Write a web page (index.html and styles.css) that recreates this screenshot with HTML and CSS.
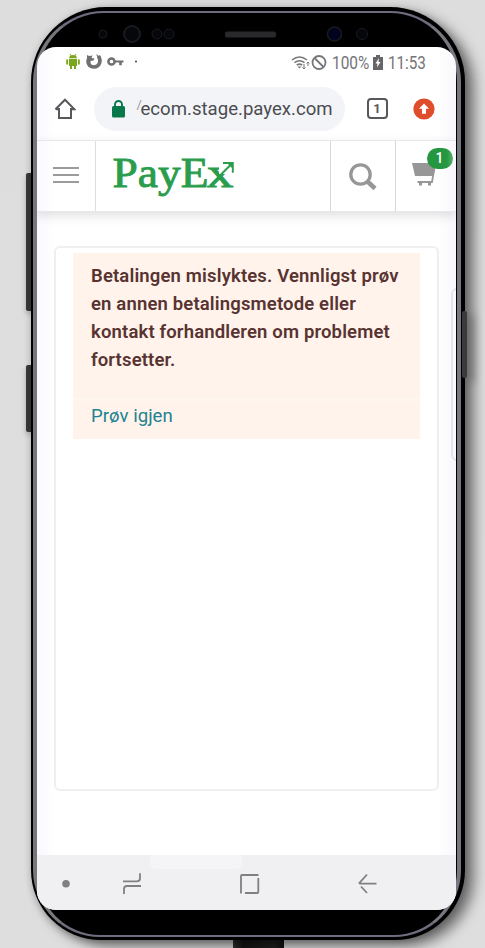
FILE: index.html
```
<!DOCTYPE html>
<html lang="nb">
<head>
<meta charset="utf-8">
<title>PayEx</title>
<link rel="stylesheet" href="styles.css">
</head>
<body>
<div class="scene">
  <i class="key key-volume"></i>
  <i class="key key-assist"></i>
  <i class="cable"></i>
  <div class="phone">
    <i class="rim"></i>
    <svg class="sensors" viewBox="0 0 434 40" width="434" height="40" fill="#06070b" stroke="#191a20">
      <circle cx="72" cy="27" r="4"/><circle cx="101" cy="27" r="8" stroke-width="2"/>
      <circle cx="126" cy="27" r="5"/><circle cx="138" cy="27" r="5"/>
      <rect x="194" y="24.500" width="51" height="6" rx="2" fill="#29292c" stroke="none"/>
      <circle cx="303.500" cy="27" r="7" fill="#02041d" stroke-width="1.500"/><circle cx="331" cy="27" r="5.500"/>
    </svg>
    <main class="screen">
      <div class="status">
        <svg class="notices" viewBox="0 0 80 20" width="80" height="20">
          <g fill="#7ba51c"><path d="M4 7h8v7H4zM1.200 7.500h1.900v5H1.200zM12.900 7.500h1.900v5h-1.900zM5 14h2v3H5zM9 14h2v3H9zM4 6.200C4.300 3.800 6 3 8 3s3.700.8 4 3.200z"/><path d="M5 2l1.500 2M11 2L9.500 4" stroke="#7ba51c"/></g>
          <path d="M24.500 4.500c-3.500 6.500 0 10.500 4.500 10.500 5.500 0 7.500-6 4.500-11" fill="none" stroke="#707073" stroke-width="3.600"/><path d="M22 3l2 1 3.500-.5-1 2.500 3 .5-1 2-3 .5v4L22 10zM31 2l4.500 3v4l-3-4z" fill="#707073"/>
          <path d="M50 8.500h8.500v2H56.800v2.700h-2.600v-2.700H50z" fill="#707073"/><circle cx="46.500" cy="9.500" r="3.100" fill="none" stroke="#707073" stroke-width="2.500"/>
          <circle cx="71" cy="9.500" r="1.100" fill="#555"/>
        </svg>
        <div class="signals">
          <svg viewBox="0 0 38 18" width="38" height="18" fill="none" stroke="#77777a">
            <path d="M1 6q7.500-6 15 0M3.500 8.700q5-4 10 0M5.800 11.200q2.700-2.200 5.400 0" stroke-width="1.600"/><path d="M6.500 12.500h4l-2 2z" fill="#77777a" stroke="none"/><path d="M13 10v5m-1.500-1.500L13 15l1.500-1.500M17 12V8m-1.300 1.300L17 8l1.300 1.300" stroke-width="1"/>
            <circle cx="28" cy="8.500" r="6.500" stroke-width="1.800"/><path d="M23.500 4l9 9" stroke-width="1.800"/>
          </svg>
          <span class="percent">100%</span>
          <svg viewBox="0 0 10 15" width="10" height="15"><path d="M3 0h4v2h3v13H0V2h3z" fill="#666669"/><path d="M6 3L2.500 8.500h2L4 12.500l3.500-5.500h-2z" fill="#fff"/></svg>
          <span class="clock">11:53</span>
        </div>
      </div>
      <div class="browser">
        <svg class="home" viewBox="0 0 22 22" width="22" height="22" fill="none" stroke="#57585b" stroke-width="2"><path d="M5 10v10h12V10M1.500 11.300L11 1.700l9.500 9.600H17M1.500 11.300H5"/></svg>
        <div class="address">
          <svg viewBox="0 0 14 18" width="14" height="18"><rect x="0" y="6" width="13" height="11.500" rx="1.500" fill="#08784b"/><path d="M3 7V4.500a3.500 3.500 0 0 1 7 0V7" fill="none" stroke="#08784b" stroke-width="1.900"/></svg>
          <span class="cut">/</span><span class="url">ecom.stage.payex.com</span>
        </div>
        <span class="tabs">1</span>
        <svg class="update" viewBox="0 0 22 22" width="22" height="22"><circle cx="11" cy="11" r="10.600" fill="#df4d2d"/><path d="M11 5.500l5 5.200h-3v5H9v-5H6z" fill="#fff"/></svg>
      </div>
      <header class="site">
        <div class="menu"><i></i><i></i><i></i></div>
        <div class="brand">
          <svg viewBox="0 0 234 69" width="234" height="69" fill="#2a9d4c">
            <clipPath id="lower-x"><path d="M105 20h18v13h16v15h-34z"/></clipPath>
            <text class="logo" x="16.500" y="45.500" textLength="96" lengthAdjust="spacingAndGlyphs">PayE</text>
            <text class="logo" x="111" y="45.500" textLength="26.500" lengthAdjust="spacingAndGlyphs" clip-path="url(#lower-x)">x</text>
            <path d="M114 44.500L136 22.500M127 22h9.800v9.800" fill="none" stroke="#2a9d4c" stroke-width="1.900"/><path d="M131 22h6v6z"/>
          </svg>
        </div>
        <div class="search"><svg viewBox="0 0 30 30" width="30" height="30" fill="none" stroke="#979797"><circle cx="12.500" cy="12.500" r="9.700" stroke-width="3.300"/><path d="M19 19l8 7.500" stroke-width="4.500"/></svg></div>
        <div class="cart">
          <svg viewBox="0 0 25 26" width="25" height="26"><path d="M0 2h24l-2.500 13H3z" fill="#979797"/><path d="M23 4l-3 17H5.500" fill="none" stroke="#979797" stroke-width="1.800"/><path d="M7 21h3v3.500H7zM16 21h3v3.500h-3z" fill="#979797"/></svg>
          <span class="count">1</span>
        </div>
      </header>
      <section class="content">
        <div class="card">
          <div class="alert">
            <p>Betalingen mislyktes. Vennligst prøv<br>en annen betalingsmetode eller<br>kontakt forhandleren om problemet<br>fortsetter.</p>
          </div>
          <div class="retry"><a>Prøv igjen</a></div>
        </div>
        <i class="edge-handle"></i>
      </section>
      <nav class="keys">
        <i class="ghost"></i>
        <svg viewBox="0 0 420 55" width="420" height="55" fill="none" stroke="#808083" stroke-width="1.800">
          <circle cx="29" cy="28.700" r="3.800" fill="#808083" stroke="none"/>
          <path d="M86 26.300h14q3 0 3-3v-5M104 31H90q-3 0-3 3v5"/>
          <path d="M204 38.500V21q0-1 1-1h16.500M221.300 23v14q0 1-1 1H208"/>
          <path d="M339.500 28.700H322.500M330 19.500l-8.200 9.200M324 31.500l6 6.500"/>
        </svg>
      </nav>
    </main>
  </div>
  <i class="key key-power"></i>
</div>
</body>
</html>
```

FILE: styles.css
```
* { box-sizing: border-box; }
body { margin: 0; font-family: Roboto, "Liberation Sans", sans-serif; }
svg { display: block; flex: none; }
.scene { position: relative; width: 485px; height: 948px; padding: 7px 20px 0 31px; overflow: hidden; background: linear-gradient(#ddd, #dedede); }
.phone { position: relative; width: 434px; height: 933px; padding: 0 9px 0 5.500px; border-radius: 75px 75px 70px 70px; background: #000; box-shadow: 9px 6px 13px rgba(0,0,0,.5), 0 2px 7px rgba(0,0,0,.2); }
.rim { position: absolute; inset: 4px 4.500px 3px 2px; border: 2px solid #706b7f; border-right: 4px solid #77777f; border-left: 4px solid #77777b; border-radius: 71px 71px 67px 67px; background: #000; }
.sensors { position: relative; margin-left: -5.500px; }
.screen { position: relative; display: flex; flex-direction: column; width: 419.500px; height: 863px; border-radius: 19px; overflow: hidden; background: linear-gradient(90deg, #f9f9fe, #fff 18px, #fff 400px, #f8f8fe); }
.status { display: flex; justify-content: space-between; height: 30px; padding: 5px 30px 0 28px; color: #747477; }
.signals { display: flex; align-items: center; height: 21px; font-size: 17.500px; }
.percent { width: 36px; margin: 0 5px 0 3px; transform: scaleX(.88); transform-origin: left; }
.clock { width: 38px; margin-left: 5px; transform: scaleX(.87); transform-origin: left; white-space: nowrap; }
.browser { display: flex; align-items: center; height: 63px; padding-left: 17px; }
.address { display: flex; align-items: center; width: 251px; height: 44px; margin: 0 22px 0 18px; padding-left: 18px; border-radius: 22px; background: #f3f4f8; color: #4b4c50; }
.cut { width: 4px; margin: -8px 0 0 11px; font-size: 13px; color: #999; }
.url { font-size: 18.600px; white-space: nowrap; }
.tabs { width: 21px; height: 21px; border: 2px solid #57585b; border-radius: 4px; font-size: 13px; font-weight: 700; line-height: 17px; text-align: center; color: #57585b; }
.update { margin-left: 25px; }
.site { display: flex; flex: none; height: 72px; border: solid #e8e8ea; border-width: 1px 0; box-shadow: 0 4px 10px rgba(0,0,0,.12); }
.menu { display: flex; flex-direction: column; gap: 5px; width: 58px; padding: 26px 0 0 16px; }
.menu i { width: 26px; height: 2px; background: #9b9b9b; }
.brand { width: 235px; border-left: 1px solid #dedede; }
.logo { font: 43px "Liberation Serif", serif; stroke: #2a9d4c; stroke-width: .9px; }
.search { width: 65px; padding: 21px 0 0 17px; border-left: 1px solid #d8d8d8; }
.cart { position: relative; flex: 1; padding: 20px 0 0 16px; border-left: 1px solid #d8d8d8; }
.count { position: absolute; left: 31px; top: 7px; width: 26px; height: 21px; border-radius: 11px; background: linear-gradient(90deg, #249740 75%, #55ae69); color: #fff; font-size: 14px; font-weight: 500; line-height: 21px; text-align: center; }
.content { position: relative; flex: 1; padding: 33.500px 17px 0 17.500px; }
.card { height: 545px; padding: 5px 17px; border: 2px solid #efeff0; border-radius: 6px; }
.alert { height: 145px; padding: 9px 0 0 18px; background: #fff3eb; color: #583331; font-size: 18.500px; letter-spacing: .15px; font-weight: 600; line-height: 28px; white-space: nowrap; }
.alert p { margin: 0; }
.retry { height: 41px; padding: 3px 0 0 18px; border-top: 3px solid #fff6ee; background: #fff3eb; color: #218392; font-size: 18.600px; line-height: 24px; }
.edge-handle { position: absolute; left: 414px; top: 76px; width: 12px; height: 173px; border: 2px solid #e3e3e9; border-radius: 8px; background: #f8f8fe; }
.keys { position: relative; flex: none; height: 55px; background: #f0eff1; }
.keys svg { position: relative; }
.ghost { position: absolute; left: 113px; top: 0; width: 92px; height: 14px; border-radius: 0 0 6px 6px; background: #f5f4f6; }
.key { position: absolute; background: #39393b; border-radius: 2px; }
.key-volume { left: 26px; top: 173px; width: 7px; height: 138px; box-shadow: 0 3px 5px rgba(0,0,0,.2); }
.key-assist { left: 26px; top: 365px; width: 7px; height: 67px; box-shadow: 0 3px 5px rgba(0,0,0,.2); }
.key-power { left: 462px; top: 311px; width: 5px; height: 67px; background: #3b3a3b; box-shadow: 7px 4px 9px rgba(0,0,0,.3); }
.cable { position: absolute; left: 233px; top: 938px; width: 51px; height: 10px; background: linear-gradient(90deg, #333, #151515 20%, #222 80%, #111); }
```
